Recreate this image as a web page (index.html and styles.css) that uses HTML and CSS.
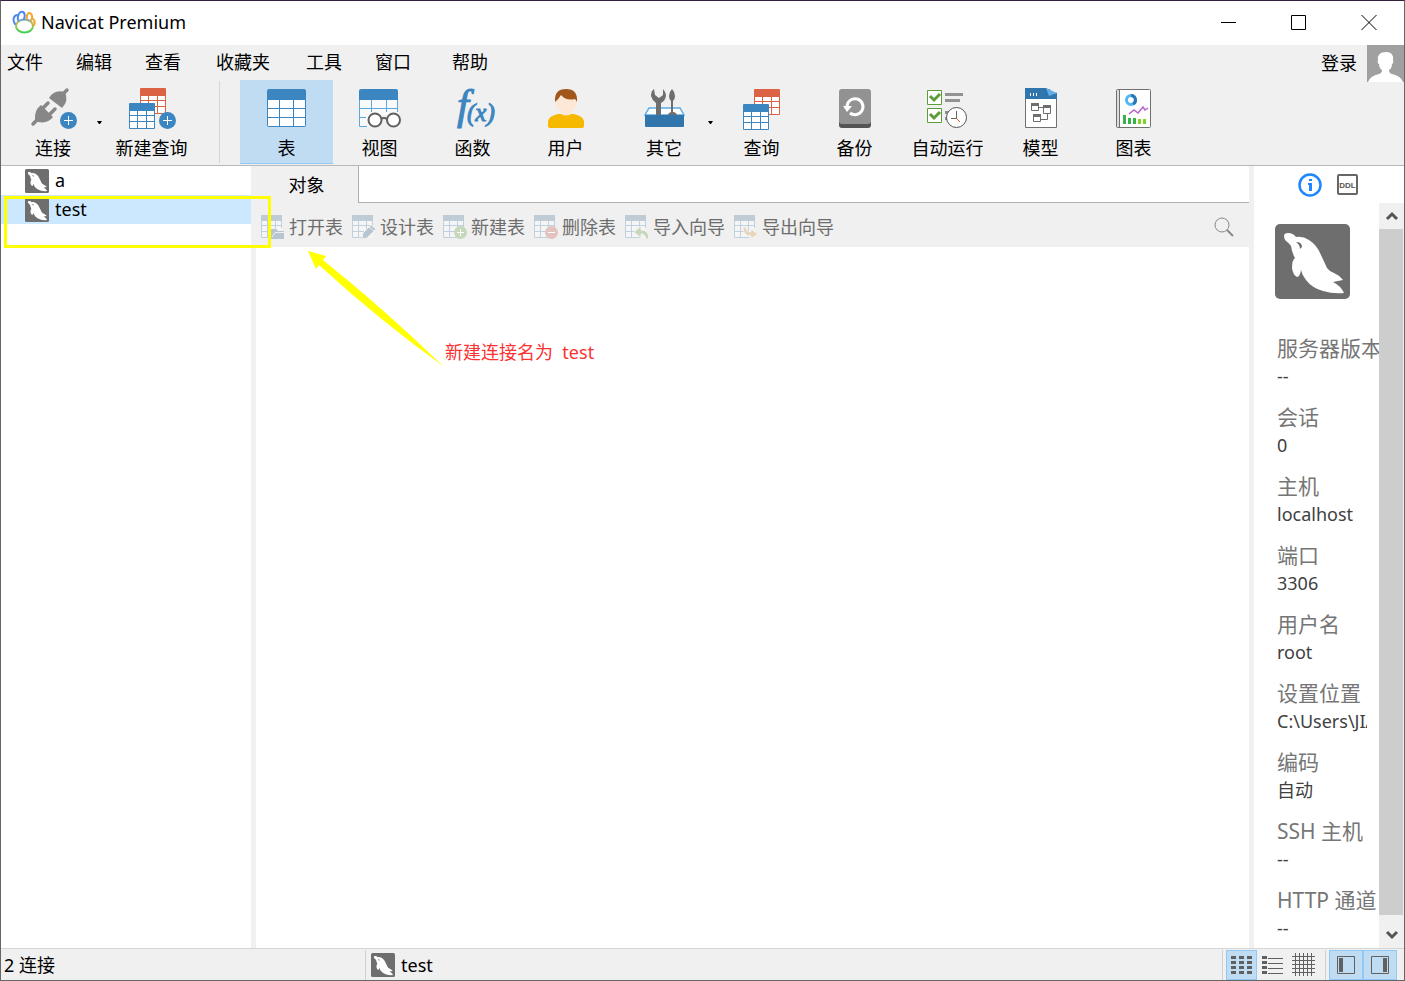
FILE: index.html
```
<!DOCTYPE html>
<html lang="zh-CN">
<head>
    <meta charset="UTF-8">
    <meta name="viewport" content="width=device-width, initial-scale=1.0">
    <title>Navicat Premium</title>
    <link rel="stylesheet" href="styles.css">
</head>
<body>
    <!-- shared icons -->
    <svg class="defs" width="0" height="0" aria-hidden="true">
        <linearGradient id="ring" x1="0" y1="0" x2="0" y2="1">
            <stop offset="0" stop-color="#6aa6d8"/>
            <stop offset=".3" stop-color="#c3c04a"/>
            <stop offset="1" stop-color="#3fd05a"/>
        </linearGradient>
        <symbol id="dolphin" viewBox="0 0 75 75">
            <rect width="75" height="75" rx="5" fill="#6e6e6e"/>
            <path fill="#fff" d="M9 12Q9 9 13 9Q18 9 21 13Q28 12 34 16Q42 21 46 31L52 44Q54 47 59 49Q64 51 68 56Q63 57 58 58Q66 62 69 69Q58 70 48 67Q37 64 31 56Q27 51 26 46Q25 53 22 53Q18 51 17 44Q17 36 20 34Q17 29 16 22Q14 19 11 17Q9 15 9 12Z"/>
            <path fill="#6e6e6e" d="M21 18Q27 18 27 23L25 25Q25 21 21 18Z"/>
        </symbol>
        <symbol id="grid-blue" viewBox="0 0 26 26">
            <rect width="26" height="26" rx="1" fill="#3b85c0"/>
            <path fill="#fff" d="M1 8h7v4H1zM9 8h8v4H9zM18 8h7v4h-7zM1 13h7v5H1zM9 13h8v5H9zM18 13h7v5h-7zM1 19h7v6H1zM9 19h8v6H9zM18 19h7v6h-7z"/>
        </symbol>
        <symbol id="grid-red" viewBox="0 0 26 26">
            <rect width="26" height="26" rx="1" fill="#db6344"/>
            <path fill="#fff" d="M1 8h7v4H1zM9 8h8v4H9zM18 8h7v4h-7zM1 13h7v5H1zM9 13h8v5H9zM18 13h7v5h-7zM1 19h7v6H1zM9 19h8v6H9zM18 19h7v6h-7z"/>
        </symbol>
        <symbol id="plus" viewBox="0 0 17 17">
            <circle cx="8.500" cy="8.500" r="8.500" fill="#3b85c0"/>
            <path d="M4 8.500h9M8.500 4v9" stroke="#fff" fill="none"/>
        </symbol>
        <symbol id="table-off" viewBox="0 0 24 24">
            <path fill="#f5f5f5" d="M0 0h21v23H0z"/>
            <path fill="#bfccd6" d="M0 0h21v6H0z"/>
            <path fill="none" stroke="#bfd1df" d="M.5 6v16.500h15M6.500 6v16M14.500 6v10M20.500 6v7M0 10.500h21M0 16.500h14"/>
        </symbol>
    </svg>

    <header class="titlebar">
        <svg class="logo" width="24" height="24" viewBox="0 0 24 24" fill="none" stroke-width="2" stroke-linecap="round">
            <ellipse cx="12.500" cy="16" rx="8.500" ry="6.500" stroke="url(#ring)"/>
            <path stroke="#4d86ee" d="M3 14C0 9 2 5 6 5M6 10C5 5 8 1 11 2C13 3 13 6 12 9"/>
            <path stroke="#f0a92b" d="M15 9C14 5 17 1 19 4C21 6 20 9 19 10M20 8Q24 11 22 15"/>
        </svg>
        <span class="title">Navicat Premium</span>
        <div class="window-buttons">
            <button aria-label="最小化"><svg width="16" height="16"><path d="M0 8.500h15"/></svg></button>
            <button aria-label="最大化"><svg width="16" height="16"><path d="M.5 1.500h14v14h-14z"/></svg></button>
            <button aria-label="关闭"><svg width="16" height="16"><path d="M.5 1l15 15M15.500 1l-15 15"/></svg></button>
        </div>
    </header>

    <nav class="menubar">
        <div class="menus">
            <button>文件</button>
            <button>编辑</button>
            <button>查看</button>
            <button>收藏夹</button>
            <button>工具</button>
            <button>窗口</button>
            <button>帮助</button>
        </div>
        <button class="login">登录</button>
        <svg class="avatar" width="37" height="37" viewBox="0 0 37 37">
            <path fill="#a0a0a0" d="M0 0h37v37H0z"/>
            <path fill="#fff" d="M1 37Q3 31 12 29Q15 28 15 25Q12 23 12 19Q10 18 11 15Q10 7 19 7Q27 7 26 15Q27 18 25 19Q25 23 22 25Q22 28 25 29Q34 31 36 37Z"/>
        </svg>
    </nav>

    <div class="toolbar">
        <button class="tool split">
            <svg width="48" height="44" viewBox="0 0 48 44">
                <g fill="#878787">
                    <path d="M6 34Q5 24 12 19L24 31Q19 38 9 36Z"/>
                    <path d="M20 12Q25 3 36 6Q40 15 33 22Z"/>
                </g>
                <path d="M4 38L10 32M33 9L38 4M14 22L19 17M21 28L26 23" stroke="#878787" stroke-width="3.500" stroke-linecap="round"/>
                <circle cx="39.500" cy="34.500" r="9.500" fill="#f0f0f0"/>
                <use href="#plus" x="31" y="26" width="17" height="17"/>
            </svg>
            连接
        </button>
        <button class="drop" aria-label="连接选项"><svg width="5" height="3"><path d="M0 0h5L3 3H2z"/></svg></button>
        <button class="tool new-query">
            <svg width="48" height="44" viewBox="0 0 48 44">
                <use href="#grid-red" x="12" y="2" width="26" height="26"/>
                <use href="#grid-blue" x="1" y="17" width="26" height="26"/>
                <use href="#plus" x="31" y="26" width="17" height="17"/>
            </svg>
            新建查询
        </button>
        <span class="tool-line"></span>
        <button class="tool active">
            <svg width="48" height="44" viewBox="0 0 48 44">
                <rect x="4" y="3" width="39" height="38" rx="2" fill="#3b85c0"/>
                <path fill="#fff" d="M5 14h11v8H5zM17 14h13v8H17zM31 14h11v8H31zM5 23h11v8H5zM17 23h13v8H17zM31 23h11v8H31zM5 32h11v8H5zM17 32h13v8H17zM31 32h11v8H31z"/>
            </svg>
            表
        </button>
        <button class="tool">
            <svg width="48" height="44" viewBox="0 0 48 44">
                <path fill="#fafafa" d="M3 12h39v17H3zM3 29h10v12H3z"/>
                <path fill="#3b85c0" d="M3 14V5q0-2 2-2h35q2 0 2 2v9z"/>
                <path fill="none" stroke="#5aa8de" d="M3.500 14v26.500H11M41.500 14v12M15.500 14v12M30.500 14v12M3 22.500h39M3 31.500h7"/>
                <g fill="#fff" stroke="#606060" stroke-width="2">
                    <circle cx="19" cy="34" r="6.500"/><circle cx="37.500" cy="34" r="6.500"/>
                    <path fill="none" d="M25 33q3-2 6 0"/>
                </g>
            </svg>
            视图
        </button>
        <button class="tool">
            <svg class="fx" width="48" height="44" viewBox="0 0 48 44">
                <text x="8" y="33" font-size="43">f</text>
                <text x="18" y="35" font-size="25">(x)</text>
            </svg>
            函数
        </button>
        <button class="tool">
            <svg width="48" height="44" viewBox="0 0 48 44">
                <path fill="#f7b900" d="M6 42V35Q7 30 16 28h16Q41 30 42 35V40q0 2-2 2H8q-2 0-2-2z"/>
                <path fill="#fde7d6" d="M13 11h22v5Q34 23 29 26V28Q24 31 19 28V26Q14 23 13 16z"/>
                <path fill="#a1571c" d="M13 16Q12 3 24 3Q36 3 35 16Q34 14 33 13Q24 15 19 9Q16 14 13 16z"/>
            </svg>
            用户
        </button>
        <button class="tool split">
            <svg width="48" height="44" viewBox="0 0 48 44">
                <path fill="#fff" stroke="#5aade8" stroke-width="1.500" d="M9 22h31l4 7H5z"/>
                <path fill="#6e6e6e" d="M14 3Q11 5 11 10Q12 14 16 17V30h5V17Q26 14 26 9Q25 5 23 3V9L19 12L15 9ZM32 3Q29 6 29 10Q29 13 31 15V26Q28 27 28 29h9Q36 26 33 26V15Q35 13 35 10Q35 6 32 3Z"/>
                <path fill="#3076ad" d="M5 29h39v11q0 1-1 1H6q-1 0-1-1z"/>
            </svg>
            其它
        </button>
        <button class="drop" aria-label="其它选项"><svg width="5" height="3"><path d="M0 0h5L3 3H2z"/></svg></button>
        <button class="tool">
            <svg width="48" height="44" viewBox="0 0 48 44">
                <use href="#grid-red" x="16" y="3" width="26" height="26"/>
                <use href="#grid-blue" x="5" y="18" width="26" height="26"/>
            </svg>
            查询
        </button>
        <button class="tool">
            <svg width="48" height="44" viewBox="0 0 48 44">
                <rect x="8" y="7" width="32" height="35" rx="3" fill="#555"/>
                <rect x="8" y="3" width="32" height="35" rx="3" fill="#929292"/>
                <path fill="none" stroke="#fff" stroke-width="3" d="M16 20A8 8 0 1 1 19 27"/>
                <path fill="#fff" d="M12 20h9l-5 6z"/>
            </svg>
            备份
        </button>
        <button class="tool">
            <svg width="48" height="44" viewBox="0 0 48 44">
                <path fill="#fff" stroke="#5b9e38" d="M3.500 4.500h14v14h-14zM3.500 22.500h14v14h-14z"/>
                <path fill="none" stroke="#5b9e38" stroke-width="3" d="M6 10l4 4 6-6M6 28l4 4 6-6"/>
                <path fill="#929292" d="M21 7h18v3H21zM21 13h15v3H21zM21 25h5v3h-5zM21 31h2v3h-2z"/>
                <circle cx="32.500" cy="31.500" r="10" fill="#fff" stroke="#555"/>
                <path fill="none" stroke="#666" d="M32.500 25v7.500H27"/>
                <path stroke="#e8553c" d="M32 32l4 4"/>
            </svg>
            自动运行
        </button>
        <button class="tool">
            <svg width="48" height="44" viewBox="0 0 48 44">
                <path fill="#fff" stroke="#707070" d="M8.500 3.500h31v38h-31z"/>
                <path fill="#3076ad" d="M8 2h21l11 6v5H8z"/>
                <path fill="#f0f0f0" d="M30 2h10v5z"/>
                <path fill="#62aeea" d="M29 2l11 5-8 3z"/>
                <path stroke="#fff" d="M13.500 7v3M16.500 7v3M19.500 7v3"/>
                <path fill="none" stroke="#6e6e6e" d="M14.500 18.500h7v6h-7zM26.500 20.500h7v7h-7zM16.500 29.500h7v6h-7zM22 21.500h4M30.500 28v5.500H24"/>
                <path fill="#6e6e6e" d="M14 17h8v3h-8zM26 19h8v3h-8zM16 28h8v3h-8z"/>
            </svg>
            模型
        </button>
        <button class="tool">
            <svg width="48" height="44" viewBox="0 0 48 44">
                <rect x="6.500" y="3.500" width="34" height="38" rx="1" fill="#fff" stroke="#707070"/>
                <path fill="#ddd" d="M7 4h2v37H7z"/>
                <path stroke="#707070" d="M9.500 3v39"/>
                <circle cx="21" cy="14" r="4.500" fill="none" stroke="#4fb7f3" stroke-width="3"/>
                <path fill="none" stroke="#2c76b8" stroke-width="3" d="M21 9.500A4.500 4.500 0 0 1 23 18"/>
                <path fill="none" stroke="#b862cd" stroke-width="1.500" d="M19 28l5-4 4 3 5-6 2 3 3-2"/>
                <path fill="#37b34a" d="M13 29h3v9h-3zM18 32h3v6h-3zM23 32h3v6h-3z"/>
                <path fill="#7fd321" d="M28 33h3v5h-3zM33 33h3v5h-3z"/>
            </svg>
            图表
        </button>
    </div>

    <main class="workspace">
        <aside class="tree">
            <button class="node"><svg width="24" height="24"><use href="#dolphin"/></svg><span>a</span></button>
            <button class="node selected"><svg width="24" height="24"><use href="#dolphin"/></svg><span>test</span></button>
        </aside>

        <section class="content">
            <div class="tabs">
                <button class="tab">对象</button>
                <div class="tab-rest"></div>
            </div>
            <div class="actions">
                <button disabled>
                    <svg width="24" height="24"><use href="#table-off"/><path fill="#b7c5d0" d="M10 14h5l2 2h6v8H10z"/><path fill="none" stroke="#efefef" d="M11 22l3-4.500h10"/></svg>
                    打开表
                </button>
                <button disabled>
                    <svg width="24" height="24"><use href="#table-off"/><path fill="#b7c5d0" stroke="#efefef" d="M10 24l1-6 8-8 5 4-9 9z"/><path stroke="#efefef" d="M17 12l5 4"/></svg>
                    设计表
                </button>
                <button disabled>
                    <svg width="24" height="24"><use href="#table-off"/><circle cx="17.500" cy="17.500" r="6.500" fill="#c6d8bb"/><path stroke="#fff" d="M14 17.500h7M17.500 14v7"/></svg>
                    新建表
                </button>
                <button disabled>
                    <svg width="24" height="24"><use href="#table-off"/><circle cx="17.500" cy="17.500" r="6.500" fill="#e3c3c0"/><path stroke="#fff" d="M14 17.500h7"/></svg>
                    删除表
                </button>
                <button disabled>
                    <svg width="24" height="24"><use href="#table-off"/><path fill="#c6d8bb" stroke="#f2f2f2" d="M9 17l7-6v4q8 0 8 9h-3q-1-5-5-5v4z"/></svg>
                    导入向导
                </button>
                <button disabled>
                    <svg width="24" height="24"><use href="#table-off"/><path fill="#e9d6b8" stroke="#f2f2f2" d="M9 12h3q0 5 5 5v-3l7 5-7 5v-3Q9 21 9 12z"/></svg>
                    导出向导
                </button>
                <button class="search" aria-label="搜索">
                    <svg width="20" height="20" fill="none" stroke="#888"><circle cx="8" cy="8" r="7"/><path d="M13 13l6 6" stroke-width="2"/></svg>
                </button>
            </div>
            <div class="objects"></div>
        </section>

        <aside class="info">
            <div class="info-tabs">
                <button aria-label="信息">
                    <svg width="24" height="24"><circle cx="12" cy="12" r="10.500" fill="none" stroke="#1e86ff" stroke-width="2.500"/><path fill="#1e86ff" d="M11 6h3v2h-3zM10 10h4v8h-3v-6h-1z"/></svg>
                </button>
                <button aria-label="DDL">
                    <svg width="21" height="21"><rect x="1" y="1" width="19" height="19" rx="1" fill="none" stroke="#666" stroke-width="2"/><text class="ddl" x="10.500" y="14" text-anchor="middle">DDL</text></svg>
                </button>
            </div>
            <div class="info-body">
                <div class="details">
                    <svg width="75" height="75"><use href="#dolphin"/></svg>
                    <dl>
                        <dt>服务器版本</dt><dd>--</dd>
                        <dt>会话</dt><dd>0</dd>
                        <dt>主机</dt><dd>localhost</dd>
                        <dt>端口</dt><dd>3306</dd>
                        <dt>用户名</dt><dd>root</dd>
                        <dt>设置位置</dt><dd>C:\Users\JIA</dd>
                        <dt>编码</dt><dd>自动</dd>
                        <dt>SSH 主机</dt><dd>--</dd>
                        <dt>HTTP 通道</dt><dd>--</dd>
                    </dl>
                </div>
                <div class="scrollbar">
                    <button aria-label="向上"><svg width="14" height="10"><path d="M2 8l5-5 5 5"/></svg></button>
                    <div class="thumb"></div>
                    <button class="down" aria-label="向下"><svg width="14" height="10"><path d="M2 2l5 5 5-5"/></svg></button>
                </div>
            </div>
        </aside>
    </main>

    <footer class="statusbar">
        <span class="count">2 连接</span>
        <span class="current"><svg width="24" height="24"><use href="#dolphin"/></svg>test</span>
        <div class="views">
            <button class="on" aria-label="列表"><svg width="21" height="18"><path fill="#606060" d="M0 0h5v3H0zM8 0h5v3H8zM16 0h5v3h-5zM0 5h5v3H0zM8 5h5v3H8zM16 5h5v3h-5zM0 10h5v3H0zM8 10h5v3H8zM16 10h5v3h-5zM0 15h5v3H0zM8 15h5v3H8zM16 15h5v3h-5z"/></svg></button>
            <button aria-label="详细信息"><svg width="21" height="18"><path fill="#606060" d="M0 0h5v3H0zM0 5h5v3H0zM0 10h5v3H0zM0 15h5v3H0zM6 2h15v1H6zM6 7h15v1H6zM6 12h15v1H6zM6 17h15v1H6z"/></svg></button>
            <button aria-label="ER 图表"><svg width="23" height="23"><path stroke="#606060" d="M3.500 0v23M7.500 0v23M11.500 0v23M15.500 0v23M19.500 0v23M0 3.500h23M0 7.500h23M0 11.500h23M0 15.500h23M0 19.500h23"/></svg></button>
        </div>
        <div class="panes">
            <button class="on" aria-label="导航窗格"><svg width="18" height="18"><path fill="none" stroke="#606060" d="M.5.5h17v17H.5z"/><path fill="#606060" d="M2 2h4v14H2z"/></svg></button>
            <button class="on" aria-label="信息窗格"><svg width="18" height="18"><path fill="none" stroke="#606060" d="M.5.5h17v17H.5z"/><path fill="#606060" d="M12 2h4v14h-4z"/></svg></button>
        </div>
    </footer>

    <!-- notes drawn over the window -->
    <div class="mark"></div>
    <svg class="arrow" width="136" height="116"><path fill="#ff0" d="M0 0L18 5L15 9Q75 57 135 115Q71 69 11 14L8 18Z"/></svg>
    <p class="note">新建连接名为&nbsp; test</p>
</body>
</html>
```
FILE: styles.css
```
* {
    box-sizing: border-box;
}
body {
    position: relative;
    display: flex;
    flex-direction: column;
    height: 100vh;
    margin: 0;
    overflow: hidden;
    border: 1px solid #666;
    border-top-color: #35203f;
    background: #f0f0f0;
    color: #000;
    font: 18px/24px "Noto Sans", "Noto Sans CJK SC", sans-serif;
}
button {
    margin: 0;
    padding: 0;
    border: none;
    background: none;
    color: inherit;
    font: inherit;
}
svg {
    display: block;
    flex: none;
}
.defs {
    position: absolute;
}

.titlebar {
    display: flex;
    flex: none;
    align-items: center;
    height: 44px;
    padding: 0 0 2px 11px;
    background: #fff;
}
.title {
    margin-left: 5px;
}
.window-buttons {
    display: flex;
    margin-left: auto;
}
.window-buttons button {
    display: grid;
    place-items: center;
    width: 70px;
    height: 42px;
}
.window-buttons path {
    fill: none;
    stroke: #000;
}

.menubar {
    display: flex;
    flex: none;
    height: 35px;
}
.menus {
    display: grid;
    grid-template-columns: 69px 69px 71px 90px 69px 77px auto;
    justify-items: start;
    padding: 0 0 2px 6px;
}
.login {
    margin-left: auto;
    margin-right: 10px;
}
.avatar {
    z-index: 1;
}

.toolbar {
    display: flex;
    flex: none;
    height: 86px;
    border-bottom: 1px solid #b8b8b8;
}
.tool {
    display: flex;
    flex-direction: column;
    align-items: center;
    gap: 6px;
    width: 93px;
    height: 84px;
    padding-top: 6px;
    white-space: nowrap;
}
.split {
    width: 88px;
    margin-left: 8px;
}
.drop {
    display: flex;
    align-items: center;
    width: 7px;
    height: 84px;
}
.new-query {
    margin-left: 1px;
}
.tool-line {
    width: 1px;
    height: 82px;
    margin: 1px 20px 0 21px;
    background: #d5d5d5;
}
.active {
    border-bottom: 1px solid #90c8f6;
    background: #c0dcf3;
}
.fx {
    overflow: visible;
    fill: #3b85c0;
    stroke: #3b85c0;
    font-family: "Liberation Serif", serif;
    font-style: italic;
}

.workspace {
    display: flex;
    flex: 1;
    min-height: 0;
}
.tree {
    width: 250px;
    background: #fff;
}
.node {
    display: flex;
    align-items: center;
    gap: 6px;
    width: 100%;
    height: 29px;
    padding-left: 24px;
}
.node span {
    padding-bottom: 2px;
}
.selected {
    background: #cce8ff;
}

.content {
    display: flex;
    flex: 1;
    flex-direction: column;
    min-width: 0;
}
.tabs {
    display: flex;
    height: 37px;
}
.tab {
    width: 107px;
    padding-left: 4px;
}
.tab-rest {
    flex: 1;
    border: solid #b0b0b0;
    border-width: 0 0 1px 1px;
    background: #fff;
}
.actions {
    display: flex;
    align-items: center;
    gap: 9px;
    height: 44px;
    padding: 3px 15px 0 10px;
    color: #6d6d6d;
}
.actions button {
    display: flex;
    align-items: center;
    gap: 4px;
    white-space: nowrap;
}
.actions .search {
    margin-left: auto;
}
.objects {
    flex: 1;
    margin-left: 5px;
    background: #fff;
}

.info {
    display: flex;
    flex-direction: column;
    width: 150px;
    margin-left: 5px;
    background: #fff;
}
.info-tabs {
    display: flex;
    flex: none;
    align-items: center;
    gap: 15px;
    height: 37px;
    padding-left: 44px;
}
.ddl {
    fill: #555;
    font: bold 8px "Liberation Sans", sans-serif;
}
.info-body {
    display: flex;
    flex: 1;
    min-height: 0;
}
.details {
    flex: 1;
    min-width: 0;
    padding: 21px 0 0 21px;
    overflow: hidden;
}
.details dl {
    margin: 35px 0 0 2px;
    line-height: 28px;
    white-space: nowrap;
}
.details dt {
    color: #767676;
    font-size: 21px;
}
.details dd {
    margin: 0 12px 13px 0;
    overflow: hidden;
    color: #404040;
}
.scrollbar {
    display: flex;
    flex-direction: column;
    width: 25px;
    background: #f0f0f0;
}
.scrollbar button {
    display: grid;
    place-items: center;
    height: 26px;
}
.scrollbar .down {
    height: 33px;
    padding-top: 6px;
}
.scrollbar path {
    fill: none;
    stroke: #555;
    stroke-width: 3;
}
.thumb {
    flex: 1;
    margin-right: 1px;
    background: #cdcdcd;
}

.statusbar {
    display: flex;
    flex: none;
    align-items: center;
    height: 32px;
    border-top: 1px solid #d5d5d5;
}
.count {
    width: 364px;
    padding-left: 3px;
}
.current {
    display: flex;
    align-items: center;
    gap: 6px;
    padding: 3px 0 3px 5px;
    border-left: 1px solid #d0d0d0;
}
.views, .panes {
    display: flex;
    height: 30px;
    padding-left: 3px;
    border-left: 1px solid #d0d0d0;
}
.views {
    width: 103px;
    margin-left: auto;
}
.panes {
    margin-right: 7px;
}
.views button, .panes button {
    display: grid;
    place-items: center;
    width: 31px;
    height: 30px;
}
.panes button {
    width: 34px;
}
.statusbar .on {
    border: 1px solid #90c8f6;
    background: #c0dcf3;
}

.mark {
    position: absolute;
    top: 195px;
    left: 3px;
    width: 267px;
    height: 52px;
    border: 3px solid #ff0;
}
.arrow {
    position: absolute;
    top: 250px;
    left: 307px;
}
.note {
    position: absolute;
    top: 339px;
    left: 444px;
    margin: 0;
    color: #fa3232;
}
```
